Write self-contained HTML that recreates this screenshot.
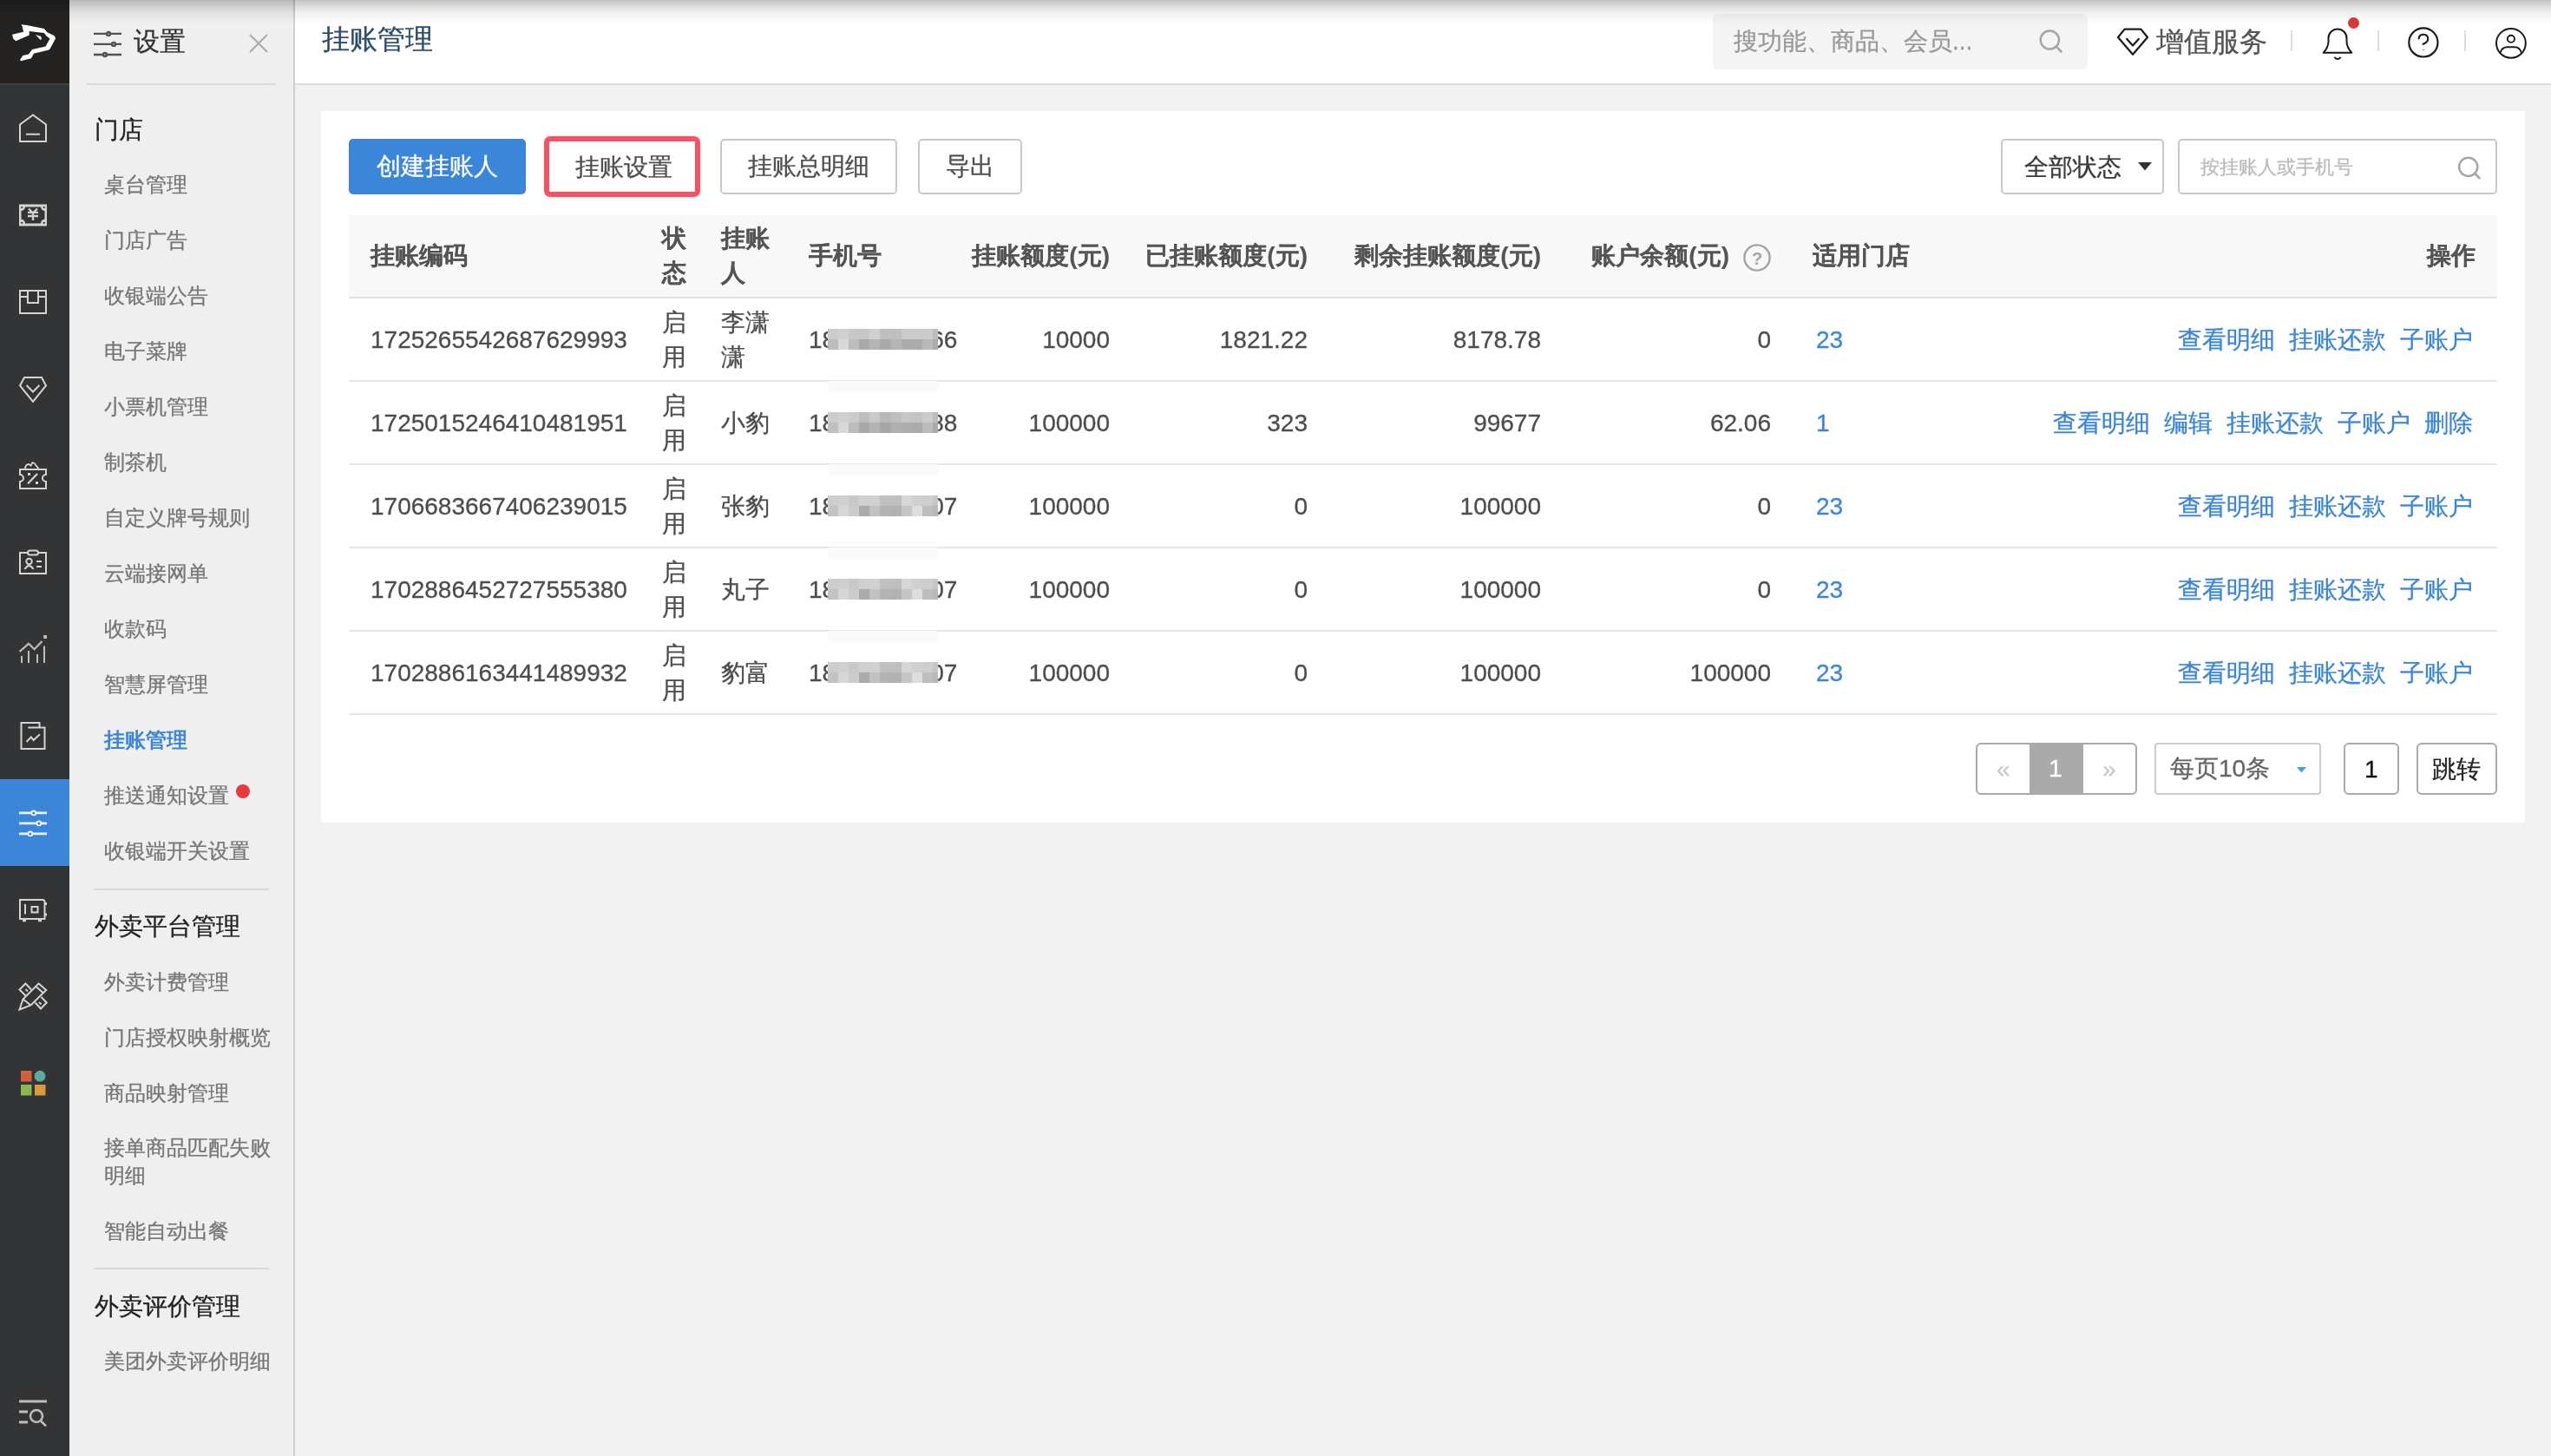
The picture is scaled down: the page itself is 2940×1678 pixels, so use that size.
<!DOCTYPE html>
<html><head><meta charset="utf-8">
<style>
*{box-sizing:border-box;margin:0;padding:0}
html,body{width:2940px;height:1678px;overflow:hidden;background:#f2f2f2;font-family:"Liberation Sans",sans-serif;-webkit-text-stroke-width:0.3px}
.a{position:absolute;white-space:nowrap}
.t{position:absolute;white-space:nowrap;line-height:1}
#nav{position:absolute;left:0;top:0;width:80px;height:1678px;background:#333436}
#logo{position:absolute;left:0;top:0;width:80px;height:96px;background:#242322}
#nav svg{position:absolute}
#side{position:absolute;left:80px;top:0;width:260px;height:1678px;background:#efefef;border-right:2px solid #cfcfcf}
#hdr{position:absolute;left:340px;top:0;width:2600px;height:98px;background:#fff;border-bottom:2px solid #dedede}
#shade{position:absolute;left:0;top:0;width:2940px;height:28px;background:linear-gradient(to bottom,rgba(0,0,0,.235),rgba(0,0,0,.12) 30%,rgba(0,0,0,.05) 55%,rgba(0,0,0,0));pointer-events:none}
.si{position:absolute;left:40px;font-size:24px;line-height:24px;color:#777;white-space:nowrap}
.sh{position:absolute;left:29px;font-size:28px;line-height:28px;color:#222;white-space:nowrap}
.dv{position:absolute;height:2px;background:#d9d9d9}
#card{position:absolute;left:370px;top:128px;width:2540px;height:820px;background:#fff}
.btn{position:absolute;top:160px;height:64px;border:2px solid #c8c8c8;border-radius:5px;background:#fff;font-size:28px;line-height:60px;color:#333;text-align:center;white-space:nowrap}
.row{position:absolute;left:402px;width:2476px;height:96px;border-bottom:2px solid #e6e6e6}
.c{position:absolute;font-size:28px;line-height:28px;color:#4d4d4d;white-space:nowrap}
.r{text-align:right}
.lk{color:#3b86d8}
.mos{position:absolute;width:127px;height:24px;display:grid;grid-template-columns:repeat(11,12.1px);grid-template-rows:12px 12px;overflow:hidden}
.mos i{display:block;width:12.1px;height:12px;flex:none}
.patch{position:absolute;width:127px;height:13px;background:#fafafa}
</style></head><body><div style="position:absolute;left:0;top:0;width:2940px;height:1678px;will-change:transform">

<!-- dark nav -->
<div id="nav">
  <div id="logo"></div>
  <div style="position:absolute;left:0;top:96px;width:80px;height:2px;background:#404145"></div>
  <div style="position:absolute;left:0;top:898px;width:80px;height:100px;background:#3b86d8"></div>
  <svg width="80" height="1678" viewBox="0 0 80 1678" style="left:0;top:0" fill="none" stroke-linecap="butt" stroke-linejoin="miter">
    <!-- logo -->
    <path d="M24.5,28.3 L30.8,29 L50.8,33.1 L54.5,37.2 L62.7,41.3 L64.1,44.2 L57.8,56.1 L56.3,57.6 L38.9,61.7 L36,67.2 L24.1,70.2 L23,69.1 L26.3,63.9 L33,62.4 L37.1,56.9 L52.6,53.5 L57.5,44.6 L53.8,41.7 L50.8,37.9 L33.7,36.1 L33.7,40.5 L18.2,47.2 L15.2,44.6 L14.1,39.8 L27.1,36.8 L25.6,30.2 Z" fill="#fff"/>
    <path d="M40.8,40 L47,41.8 L48.2,44.2 L46.8,46.2 Z" fill="#e8e8e8"/>
    <g stroke="#d4d4d4" stroke-width="2">
      <!-- home -->
      <path d="M23,143.5 L38,132.5 L53,143.5 L53,163 L23,163 Z"/>
      <path d="M30,154.7 H46"/>
      <!-- box -->
      <path d="M23,335 H53 V361 H23 Z M23,342 H32 M44,342 H53 M32,335 V349 H44 V335"/>
      <!-- diamond -->
      <path d="M28,435 H48 L53,444.5 L38,463 L23,444.5 Z"/>
      <path d="M30.5,444 L38,451.5 L45.5,444"/>
      <!-- coupon -->
      <path d="M23,541 H53 V547 A4,4 0 0 0 53,555 V563 H23 V555 A4,4 0 0 0 23,547 Z"/>
      <path d="M28.5,540 L30.5,535.8 L33,534.8 L35.5,536.8 L37.2,533.2 L39.6,533.8 L42,537.2 L44.5,540" stroke-width="1.8" stroke-linejoin="round"/>
      <path d="M32,557.5 L43,546" stroke-width="2.3"/>
      <!-- badge -->
      <path d="M23,637 H53 V661 H23 Z"/>
      <rect x="32" y="634.5" width="12" height="5" rx="2.5" fill="#333436"/>
      <circle cx="33.5" cy="647" r="3.2"/>
      <path d="M28.5,656 Q33.5,648 38.5,656"/>
      <path d="M42,647 H48 M42,653 H48"/>
      <!-- chart -->
      <path d="M25,756 V764 M33,750 V764 M43,754 V764 M51,744.5 V764" stroke="#bdbdbd"/>
      <path d="M22.5,751 L33,741.8 L39.6,748.2 L48.5,739" stroke="#bdbdbd" stroke-width="2.2"/>
      <rect x="50.2" y="732" width="3.8" height="4" fill="#bdbdbd" stroke="none"/>
      <!-- report -->
      <path d="M24.5,833 H45.5 V838.6 H51.5 V863 H24.5 Z M32.4,838.6 H45.5"/>
      <path d="M30.5,855 L35.8,849.5 L38.7,853 L45.9,846.3"/>
      <!-- safe -->
      <path d="M23,1037 H49 A2.5,2.5 0 0 1 51.5,1039.5 V1059 H23 Z"/>
      <path d="M29,1042 V1053.5"/>
      <rect x="36.5" y="1045" width="7" height="6.5"/>
      <path d="M52,1041.5 H54 M52,1054 H54 M26,1060.8 H30 M44,1060.8 H48" stroke-width="3"/>
      <!-- pencil ruler -->
      <path d="M44.5,1133.5 L53.2,1141 L35.5,1158.5 L22.5,1163.5 L26.5,1151.5 Z"/>
      <path d="M26.5,1151.5 L35.5,1158.5 M41.5,1137 L50,1144.5"/>
      <path d="M36,1140.5 L29.5,1133.5 L22.5,1140.5 L29.5,1147.5"/>
      <path d="M40.5,1155.5 L47,1162.5 L53.8,1155.5 L47.5,1149"/>
      <path d="M29.5,1140 L32,1142.5 M45,1155 L47.5,1157.5" stroke-width="1.8"/>
    </g>
    <!-- yen card -->
    <path fill="#d4d4d4" fill-rule="evenodd" d="M22,235.5 H54 V260.5 H22 Z M29,238.5 H47 A5,5 0 0 0 51.5,243 V252.8 A5,5 0 0 0 47,257.6 H29 A5,5 0 0 0 24.5,252.8 V243 A5,5 0 0 0 29,238.5 Z"/>
    <g fill="#333436"><circle cx="25.2" cy="239" r="1.1"/><circle cx="50.8" cy="239" r="1.1"/><circle cx="25.2" cy="256.8" r="1.1"/><circle cx="50.8" cy="256.8" r="1.1"/></g>
    <path d="M33,240.5 L38,245.5 L43,240.5 M38,245.5 V254 M32,244.8 H44 M32,249 H44" stroke="#d0d0d0" stroke-width="2.3"/>
    <g fill="#d4d4d4"><rect x="32" y="545" width="3" height="3"/><rect x="41" y="555" width="3" height="3"/></g>
    <!-- active sliders -->
    <g stroke="#eef2f8" stroke-width="2.6">
      <path d="M22,936.9 H54 M22,948.9 H54 M22,960.9 H54"/>
    </g>
    <g fill="#3b86d8" stroke="#eef2f8" stroke-width="1.8">
      <circle cx="38.8" cy="936.9" r="2.4"/>
      <circle cx="44.9" cy="948.9" r="2.4"/>
      <circle cx="34.8" cy="960.9" r="2.4"/>
    </g>
    <!-- grid -->
    <rect x="24" y="1234" width="12.5" height="12.5" fill="#d35f3b"/>
    <circle cx="46" cy="1240.2" r="6.4" fill="#5aaba0"/>
    <rect x="24" y="1250" width="12.5" height="12.5" fill="#8cb84c"/>
    <rect x="40" y="1250" width="12.5" height="12.5" fill="#dc9a3c"/>
    <!-- bottom search list -->
    <g stroke="#bdbdbd" stroke-width="3">
      <path d="M22,1615 H54 M22,1627 H32 M22,1639 H32"/>
    </g>
    <circle cx="42" cy="1632" r="7" stroke="#bdbdbd" stroke-width="2.5"/>
    <path d="M47,1637.5 L53,1643.5" stroke="#bdbdbd" stroke-width="2.5"/>
  </svg>
</div>

<!-- second sidebar -->
<div id="side">
<svg class="a" style="left:26px;top:34px" width="36" height="36" viewBox="0 0 36 36" fill="none">
<g stroke="#505454" stroke-width="2.4"><path d="M2,4.9 H34 M2,16.9 H34 M2,29 H34"/></g>
<circle cx="19" cy="4.9" r="2.1" fill="#999" stroke="#505454" stroke-width="2.2"/>
<circle cx="25" cy="16.9" r="2.1" fill="#999" stroke="#505454" stroke-width="2.2"/>
<circle cx="15" cy="29" r="2.1" fill="#999" stroke="#505454" stroke-width="2.2"/>
</svg>
<div class="t" style="left:74px;top:33px;font-size:30px;color:#333">设置</div>
<svg class="a" style="left:206px;top:38px" width="24" height="24" viewBox="0 0 24 24"><path d="M2,2 L22,22 M22,2 L2,22" stroke="#aaa" stroke-width="2"/></svg>
<div class="dv" style="left:20px;top:96px;width:218px"></div>
<div class="sh" style="top:136px">门店</div>
<div class="si" style="top:201px">桌台管理</div>
<div class="si" style="top:265px">门店广告</div>
<div class="si" style="top:329px">收银端公告</div>
<div class="si" style="top:393px">电子菜牌</div>
<div class="si" style="top:457px">小票机管理</div>
<div class="si" style="top:521px">制茶机</div>
<div class="si" style="top:585px">自定义牌号规则</div>
<div class="si" style="top:649px">云端接网单</div>
<div class="si" style="top:713px">收款码</div>
<div class="si" style="top:777px">智慧屏管理</div>
<div class="si" style="top:841px;color:#3b86d8;font-weight:bold;-webkit-text-stroke-width:0">挂账管理</div>
<div class="si" style="top:905px">推送通知设置</div>
<div class="si" style="top:969px">收银端开关设置</div>
<div class="a" style="left:192px;top:904px;width:16px;height:16px;border-radius:50%;background:#e63a3f"></div>
<div class="dv" style="left:28px;top:1024px;width:202px"></div>
<div class="sh" style="top:1054px">外卖平台管理</div>
<div class="si" style="top:1120px">外卖计费管理</div>
<div class="si" style="top:1184px">门店授权映射概览</div>
<div class="si" style="top:1248px">商品映射管理</div>
<div class="si" style="top:1311px">接单商品匹配失败</div>
<div class="si" style="top:1343px">明细</div>
<div class="si" style="top:1407px">智能自动出餐</div>
<div class="dv" style="left:28px;top:1461px;width:202px"></div>
<div class="sh" style="top:1492px">外卖评价管理</div>
<div class="si" style="top:1557px">美团外卖评价明细</div>
</div>

<!-- header -->
<div id="hdr">
<div class="t" style="left:31px;top:29px;font-size:32px;color:#2a4b6b">挂账管理</div>
<div class="a" style="left:1634px;top:16px;width:432px;height:64px;background:#f4f4f4;border-radius:6px"></div>
<div class="t" style="left:1658px;top:34px;font-size:28px;color:#999">搜功能、商品、会员...</div>
<svg class="a" style="left:2006px;top:32px" width="36" height="36" viewBox="0 0 36 36" fill="none"><circle cx="16.3" cy="14" r="10.6" stroke="#a6a6a6" stroke-width="2.5"/><path d="M23.8,21.6 L29.5,27.5" stroke="#a6a6a6" stroke-width="2.6" stroke-linecap="round"/></svg>
<svg class="a" style="left:2098px;top:30px" width="40" height="36" viewBox="0 0 40 36" fill="none"><path d="M10.5,3.6 H29.4 L37,13 L20,32.7 L3,13 Z" stroke="#1e1e1e" stroke-width="2.3" stroke-linejoin="round"/><path d="M13.2,14.9 L20,22.5 L26.8,14.9" stroke="#1e1e1e" stroke-width="2.3" stroke-linecap="round" stroke-linejoin="round"/></svg>
<div class="t" style="left:2145px;top:32px;font-size:32px;color:#555">增值服务</div>
<div class="a" style="left:2300px;top:35px;width:2px;height:24px;background:#ddd"></div>
<svg class="a" style="left:2330px;top:28px" width="48" height="46" viewBox="0 0 48 46" fill="none"><path d="M7.7,32.7 Q13.5,26.5 13.5,19.5 V16 A10.5,10.5 0 0 1 34.5,16 V19.5 Q34.5,26.5 40.3,32.7 Z" stroke="#1a1a1a" stroke-width="2" stroke-linejoin="round"/><path d="M20.3,37.8 Q24,42.2 27.7,37.8" stroke="#1a1a1a" stroke-width="1.9"/></svg>
<div class="a" style="left:2366px;top:20px;width:13px;height:13px;border-radius:50%;background:#d93a36"></div>
<div class="a" style="left:2400px;top:35px;width:2px;height:24px;background:#ddd"></div>
<svg class="a" style="left:2433px;top:29px" width="40" height="40" viewBox="0 0 40 40" fill="none"><circle cx="19.9" cy="19.9" r="16.6" stroke="#1a1a1a" stroke-width="2.2"/><path d="M14.6,15.4 Q15.2,10.8 19.9,10.8 Q25.2,10.8 25.2,16 Q25.2,19.6 19.6,21.8" stroke="#1a1a1a" stroke-width="2.1" stroke-linecap="round"/><rect x="19.2" y="28" width="1.6" height="1" fill="#555"/></svg>
<div class="a" style="left:2500px;top:35px;width:2px;height:24px;background:#ddd"></div>
<svg class="a" style="left:2534px;top:30px" width="40" height="40" viewBox="0 0 40 40" fill="none"><circle cx="19.9" cy="19.8" r="16.9" stroke="#1a1a1a" stroke-width="2"/><circle cx="19.9" cy="14.8" r="4.1" stroke="#1a1a1a" stroke-width="1.9"/><path d="M7.7,30.4 Q9.5,24.2 15.8,24.2 H24 Q30,24.2 31.9,30.8" stroke="#1a1a1a" stroke-width="1.9"/></svg>
</div>

<!-- content card -->
<div id="card"></div>
<div class="btn" style="left:402px;width:204px;background:#3b86d8;border-color:#3b86d8;color:#fff">创建挂账人</div>
<div class="btn" style="left:634px;width:170px;border:none;line-height:60px;top:163px;height:58px;color:#4f4f4f">挂账设置</div>
<div class="a" style="left:627px;top:157px;width:180px;height:70px;border:6px solid #fd4f64;border-radius:7px"></div>
<div class="btn" style="left:830px;width:204px;color:#4f4f4f">挂账总明细</div>
<div class="btn" style="left:1058px;width:120px;color:#4f4f4f">导出</div>
<div class="btn" style="left:2306px;width:188px;text-align:left;padding-left:25px;line-height:62px;color:#3a3a3a">全部状态</div>
<svg class="a" style="left:2463px;top:186px" width="18" height="12" viewBox="0 0 18 12"><path d="M1,1 H17 L9,10.5 Z" fill="#333"/></svg>
<div class="btn" style="left:2510px;width:368px"></div>
<div class="t" style="left:2536px;top:182px;font-size:22px;color:#bbb">按挂账人或手机号</div>
<svg class="a" style="left:2830px;top:178px" width="34" height="34" viewBox="0 0 34 34" fill="none"><circle cx="14.7" cy="14.3" r="10.6" stroke="#a6a6a6" stroke-width="2.5"/><path d="M22,21.8 L27.4,27" stroke="#a6a6a6" stroke-width="2.6" stroke-linecap="round"/></svg>
<div class="a" style="left:402px;top:248px;width:2476px;height:96px;background:#f8f8f8;border-bottom:2px solid #e3e3e3"></div>
<div class="t" style="left:427px;top:281px;font-size:28px;font-weight:bold;color:#555;-webkit-text-stroke-width:0.1px">挂账编码</div>
<div class="t" style="left:763px;top:261px;font-size:28px;font-weight:bold;color:#555;-webkit-text-stroke-width:0.1px">状</div>
<div class="t" style="left:763px;top:301px;font-size:28px;font-weight:bold;color:#555;-webkit-text-stroke-width:0.1px">态</div>
<div class="t" style="left:831px;top:261px;font-size:28px;font-weight:bold;color:#555;-webkit-text-stroke-width:0.1px">挂账</div>
<div class="t" style="left:831px;top:301px;font-size:28px;font-weight:bold;color:#555;-webkit-text-stroke-width:0.1px">人</div>
<div class="t" style="left:932px;top:281px;font-size:28px;font-weight:bold;color:#555;-webkit-text-stroke-width:0.1px">手机号</div>
<div class="t" style="right:1661px;top:281px;font-size:28px;font-weight:bold;color:#555;-webkit-text-stroke-width:0.1px">挂账额度(元)</div>
<div class="t" style="right:1433px;top:281px;font-size:28px;font-weight:bold;color:#555;-webkit-text-stroke-width:0.1px">已挂账额度(元)</div>
<div class="t" style="right:1164px;top:281px;font-size:28px;font-weight:bold;color:#555;-webkit-text-stroke-width:0.1px">剩余挂账额度(元)</div>
<div class="t" style="right:947px;top:281px;font-size:28px;font-weight:bold;color:#555;-webkit-text-stroke-width:0.1px">账户余额(元)</div>
<svg class="a" style="left:2008px;top:280px" width="34" height="34" viewBox="0 0 34 34" fill="none"><circle cx="17" cy="17" r="14.6" stroke="#a3a3a3" stroke-width="2.4"/><text x="17" y="24.6" font-family="Liberation Sans" font-size="20" font-weight="bold" text-anchor="middle" fill="#a3a3a3">?</text></svg>
<div class="t" style="left:2089px;top:281px;font-size:28px;font-weight:bold;color:#555;-webkit-text-stroke-width:0.1px">适用门店</div>
<div class="t" style="right:87px;top:281px;font-size:28px;font-weight:bold;color:#555;-webkit-text-stroke-width:0.1px">操作</div>
<div class="a" style="left:402px;top:344px;width:2476px;height:96px;border-bottom:2px solid #e6e6e6"></div>
<div class="c " style="left:427px;top:378px">1725265542687629993</div>
<div class="c " style="left:763px;top:358px">启</div>
<div class="c " style="left:763px;top:398px">用</div>
<div class="c " style="left:831px;top:358px">李潇</div>
<div class="c " style="left:831px;top:398px">潇</div>
<div class="c " style="left:932px;top:378px">18000000066</div>
<div class="mos" style="left:954px;top:379px"><i style="background:#cccccc"></i><i style="background:#d0d0d0"></i><i style="background:#c8c8c8"></i><i style="background:#c8c8c8"></i><i style="background:#d0d0d0"></i><i style="background:#bfbfbf"></i><i style="background:#bfbfbf"></i><i style="background:#cbcbcb"></i><i style="background:#cbcbcb"></i><i style="background:#cbcbcb"></i><i style="background:#bdbdbd"></i><i style="background:#bcbcbc"></i><i style="background:#d8d8d8"></i><i style="background:#bdbdbd"></i><i style="background:#a9a9a9"></i><i style="background:#b5b5b5"></i><i style="background:#aaaaaa"></i><i style="background:#b5b5b5"></i><i style="background:#acacac"></i><i style="background:#acacac"></i><i style="background:#b8b8b8"></i><i style="background:#ababab"></i></div>
<div class="patch" style="left:954px;top:439px"></div>
<div class="c " style="right:1661px;top:378px">10000</div>
<div class="c " style="right:1433px;top:378px">1821.22</div>
<div class="c " style="right:1164px;top:378px">8178.78</div>
<div class="c " style="right:899px;top:378px">0</div>
<div class="c lk" style="left:2093px;top:378px">23</div>
<div class="c lk" style="right:90px;top:378px;word-spacing:0">查看明细<span style="margin-left:16px"></span>挂账还款<span style="margin-left:16px"></span>子账户</div>
<div class="a" style="left:402px;top:440px;width:2476px;height:96px;border-bottom:2px solid #e6e6e6"></div>
<div class="c " style="left:427px;top:474px">1725015246410481951</div>
<div class="c " style="left:763px;top:454px">启</div>
<div class="c " style="left:763px;top:494px">用</div>
<div class="c " style="left:831px;top:474px">小豹</div>
<div class="c " style="left:932px;top:474px">18000000088</div>
<div class="mos" style="left:954px;top:475px"><i style="background:#cccccc"></i><i style="background:#d0d0d0"></i><i style="background:#cccccc"></i><i style="background:#bdbdbd"></i><i style="background:#c9c9c9"></i><i style="background:#b8b8b8"></i><i style="background:#bebebe"></i><i style="background:#c6c6c6"></i><i style="background:#c3c3c3"></i><i style="background:#cbcbcb"></i><i style="background:#bdbdbd"></i><i style="background:#c0c0c0"></i><i style="background:#d8d8d8"></i><i style="background:#bdbdbd"></i><i style="background:#a8a8a8"></i><i style="background:#b4b4b4"></i><i style="background:#a6a6a6"></i><i style="background:#b0b0b0"></i><i style="background:#adadad"></i><i style="background:#ababab"></i><i style="background:#bcbcbc"></i><i style="background:#aaaaaa"></i></div>
<div class="patch" style="left:954px;top:535px"></div>
<div class="c " style="right:1661px;top:474px">100000</div>
<div class="c " style="right:1433px;top:474px">323</div>
<div class="c " style="right:1164px;top:474px">99677</div>
<div class="c " style="right:899px;top:474px">62.06</div>
<div class="c lk" style="left:2093px;top:474px">1</div>
<div class="c lk" style="right:90px;top:474px;word-spacing:0">查看明细<span style="margin-left:16px"></span>编辑<span style="margin-left:16px"></span>挂账还款<span style="margin-left:16px"></span>子账户<span style="margin-left:16px"></span>删除</div>
<div class="a" style="left:402px;top:536px;width:2476px;height:96px;border-bottom:2px solid #e6e6e6"></div>
<div class="c " style="left:427px;top:570px">1706683667406239015</div>
<div class="c " style="left:763px;top:550px">启</div>
<div class="c " style="left:763px;top:590px">用</div>
<div class="c " style="left:831px;top:570px">张豹</div>
<div class="c " style="left:932px;top:570px">18000000007</div>
<div class="mos" style="left:954px;top:571px"><i style="background:#cdcdcd"></i><i style="background:#d0d0d0"></i><i style="background:#c9c9c9"></i><i style="background:#d0d0d0"></i><i style="background:#d0d0d0"></i><i style="background:#c0c0c0"></i><i style="background:#bfbfbf"></i><i style="background:#d6d6d6"></i><i style="background:#cfcfcf"></i><i style="background:#cecece"></i><i style="background:#c6c6c6"></i><i style="background:#c3c3c3"></i><i style="background:#d7d7d7"></i><i style="background:#cccccc"></i><i style="background:#ababab"></i><i style="background:#c1c1c1"></i><i style="background:#b3b3b3"></i><i style="background:#b1b1b1"></i><i style="background:#c6c6c6"></i><i style="background:#dedede"></i><i style="background:#bebebe"></i><i style="background:#b9b9b9"></i></div>
<div class="patch" style="left:954px;top:631px"></div>
<div class="c " style="right:1661px;top:570px">100000</div>
<div class="c " style="right:1433px;top:570px">0</div>
<div class="c " style="right:1164px;top:570px">100000</div>
<div class="c " style="right:899px;top:570px">0</div>
<div class="c lk" style="left:2093px;top:570px">23</div>
<div class="c lk" style="right:90px;top:570px;word-spacing:0">查看明细<span style="margin-left:16px"></span>挂账还款<span style="margin-left:16px"></span>子账户</div>
<div class="a" style="left:402px;top:632px;width:2476px;height:96px;border-bottom:2px solid #e6e6e6"></div>
<div class="c " style="left:427px;top:666px">1702886452727555380</div>
<div class="c " style="left:763px;top:646px">启</div>
<div class="c " style="left:763px;top:686px">用</div>
<div class="c " style="left:831px;top:666px">丸子</div>
<div class="c " style="left:932px;top:666px">18000000007</div>
<div class="mos" style="left:954px;top:667px"><i style="background:#cdcdcd"></i><i style="background:#d0d0d0"></i><i style="background:#c9c9c9"></i><i style="background:#d0d0d0"></i><i style="background:#d0d0d0"></i><i style="background:#c0c0c0"></i><i style="background:#bfbfbf"></i><i style="background:#d6d6d6"></i><i style="background:#cfcfcf"></i><i style="background:#cecece"></i><i style="background:#c6c6c6"></i><i style="background:#c3c3c3"></i><i style="background:#d7d7d7"></i><i style="background:#cccccc"></i><i style="background:#ababab"></i><i style="background:#c1c1c1"></i><i style="background:#b3b3b3"></i><i style="background:#b1b1b1"></i><i style="background:#c6c6c6"></i><i style="background:#dedede"></i><i style="background:#bebebe"></i><i style="background:#b9b9b9"></i></div>
<div class="patch" style="left:954px;top:727px"></div>
<div class="c " style="right:1661px;top:666px">100000</div>
<div class="c " style="right:1433px;top:666px">0</div>
<div class="c " style="right:1164px;top:666px">100000</div>
<div class="c " style="right:899px;top:666px">0</div>
<div class="c lk" style="left:2093px;top:666px">23</div>
<div class="c lk" style="right:90px;top:666px;word-spacing:0">查看明细<span style="margin-left:16px"></span>挂账还款<span style="margin-left:16px"></span>子账户</div>
<div class="a" style="left:402px;top:728px;width:2476px;height:96px;border-bottom:2px solid #e6e6e6"></div>
<div class="c " style="left:427px;top:762px">1702886163441489932</div>
<div class="c " style="left:763px;top:742px">启</div>
<div class="c " style="left:763px;top:782px">用</div>
<div class="c " style="left:831px;top:762px">豹富</div>
<div class="c " style="left:932px;top:762px">18000000007</div>
<div class="mos" style="left:954px;top:763px"><i style="background:#cdcdcd"></i><i style="background:#d0d0d0"></i><i style="background:#c9c9c9"></i><i style="background:#d0d0d0"></i><i style="background:#d0d0d0"></i><i style="background:#c0c0c0"></i><i style="background:#bfbfbf"></i><i style="background:#d6d6d6"></i><i style="background:#cfcfcf"></i><i style="background:#cecece"></i><i style="background:#c6c6c6"></i><i style="background:#c3c3c3"></i><i style="background:#d7d7d7"></i><i style="background:#cccccc"></i><i style="background:#ababab"></i><i style="background:#c1c1c1"></i><i style="background:#b3b3b3"></i><i style="background:#b1b1b1"></i><i style="background:#c6c6c6"></i><i style="background:#dedede"></i><i style="background:#bebebe"></i><i style="background:#b9b9b9"></i></div>
<div class="c " style="right:1661px;top:762px">100000</div>
<div class="c " style="right:1433px;top:762px">0</div>
<div class="c " style="right:1164px;top:762px">100000</div>
<div class="c " style="right:899px;top:762px">100000</div>
<div class="c lk" style="left:2093px;top:762px">23</div>
<div class="c lk" style="right:90px;top:762px;word-spacing:0">查看明细<span style="margin-left:16px"></span>挂账还款<span style="margin-left:16px"></span>子账户</div>
<div class="a" style="left:2277px;top:856px;width:186px;height:60px;border:2px solid #a9a9a9;border-radius:6px;overflow:hidden;background:#fff"><div class="a" style="left:60px;top:0;width:62px;height:56px;background:#aaa"></div></div>
<div class="t" style="left:2301px;top:873px;font-size:28px;color:#c8c8c8">«</div>
<div class="t" style="left:2361px;top:872px;font-size:28px;color:#fff">1</div>
<div class="t" style="left:2423px;top:873px;font-size:28px;color:#c8c8c8">»</div>
<div class="a" style="left:2483px;top:856px;width:192px;height:60px;border:2px solid #ccc;border-radius:4px;background:#fff"></div>
<div class="t" style="left:2501px;top:872px;font-size:28px;color:#666">每页10条</div>
<svg class="a" style="left:2647px;top:884px" width="11" height="7" viewBox="0 0 11 7"><path d="M0,0 H11 L5.5,6.5 Z" fill="#4a9fd9"/></svg>
<div class="a" style="left:2701px;top:856px;width:64px;height:60px;border:2px solid #aaa;border-radius:6px;background:#fff"></div>
<div class="t" style="left:2725px;top:873px;font-size:28px;color:#111">1</div>
<div class="a" style="left:2785px;top:856px;width:93px;height:60px;border:2px solid #aaa;border-radius:6px;background:#fff"></div>
<div class="t" style="left:2803px;top:873px;font-size:28px;color:#222">跳转</div>

<div id="shade"></div>
</div></body></html>
